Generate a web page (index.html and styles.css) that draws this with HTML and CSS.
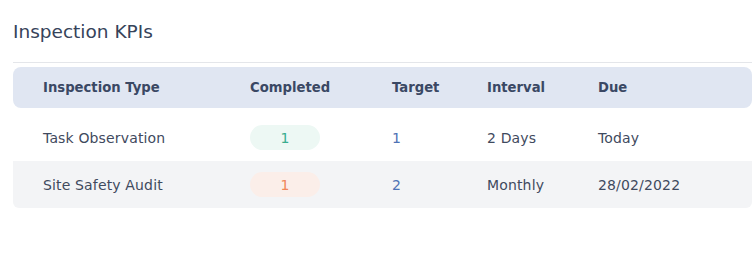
FILE: index.html
```html
<!DOCTYPE html>
<html>
<head>
<meta charset="utf-8">
<link rel="stylesheet" href="styles.css">
</head>
<body>
<div class="panel">
  <div class="panel-head">
    <h2 class="title">Inspection KPIs</h2>
  </div>
  <div class="table">
    <div class="row head">
      <div>Inspection Type</div>
      <div>Completed</div>
      <div>Target</div>
      <div>Interval</div>
      <div>Due</div>
    </div>
    <div class="row">
      <div>Task Observation</div>
      <div><span class="badge ok">1</span></div>
      <div class="target">1</div>
      <div>2 Days</div>
      <div>Today</div>
    </div>
    <div class="row alt">
      <div>Site Safety Audit</div>
      <div><span class="badge bad">1</span></div>
      <div class="target">2</div>
      <div>Monthly</div>
      <div>28/02/2022</div>
    </div>
  </div>
</div>
</body>
</html>
```
FILE: styles.css
```css
html, body {
  margin: 0;
  padding: 0;
  background: #ffffff;
}
body {
  font-family: "DejaVu Sans", "Open Sans", sans-serif;
  color: #3f4a5e;
}
.panel {
  margin-left: 13px;
  width: 739px;
}
.panel-head {
  height: 62px;
  border-bottom: 1px solid #e4e6ea;
  display: flex;
  align-items: center;
}
.title {
  margin: 0;
  font-size: 18.5px;
  font-weight: 400;
  color: #36435a;
}
.table {
  margin-top: 4px;
}
.row {
  display: grid;
  grid-template-columns: 207px 142px 95px 111px 1fr;
  padding-left: 30px;
  align-items: center;
  height: 47px;
  font-size: 14px;
  letter-spacing: 0.15px;
}
.row.head {
  height: 41px;
  margin-bottom: 6px;
  background: #e0e6f2;
  border-radius: 8px;
  font-weight: 700;
  font-size: 13.2px;
  letter-spacing: 0;
  color: #3a4864;
}
.row.alt {
  background: #f3f4f6;
  border-radius: 0 0 6px 6px;
}
.badge {
  display: flex;
  align-items: center;
  justify-content: center;
  width: 70px;
  height: 25px;
  border-radius: 13px;
  font-size: 14px;
}
.badge.ok {
  background: #edf8f4;
  color: #39ad8f;
}
.badge.bad {
  background: #fbeee9;
  color: #f0875a;
}
.target {
  color: #4e72b5;
}
```
